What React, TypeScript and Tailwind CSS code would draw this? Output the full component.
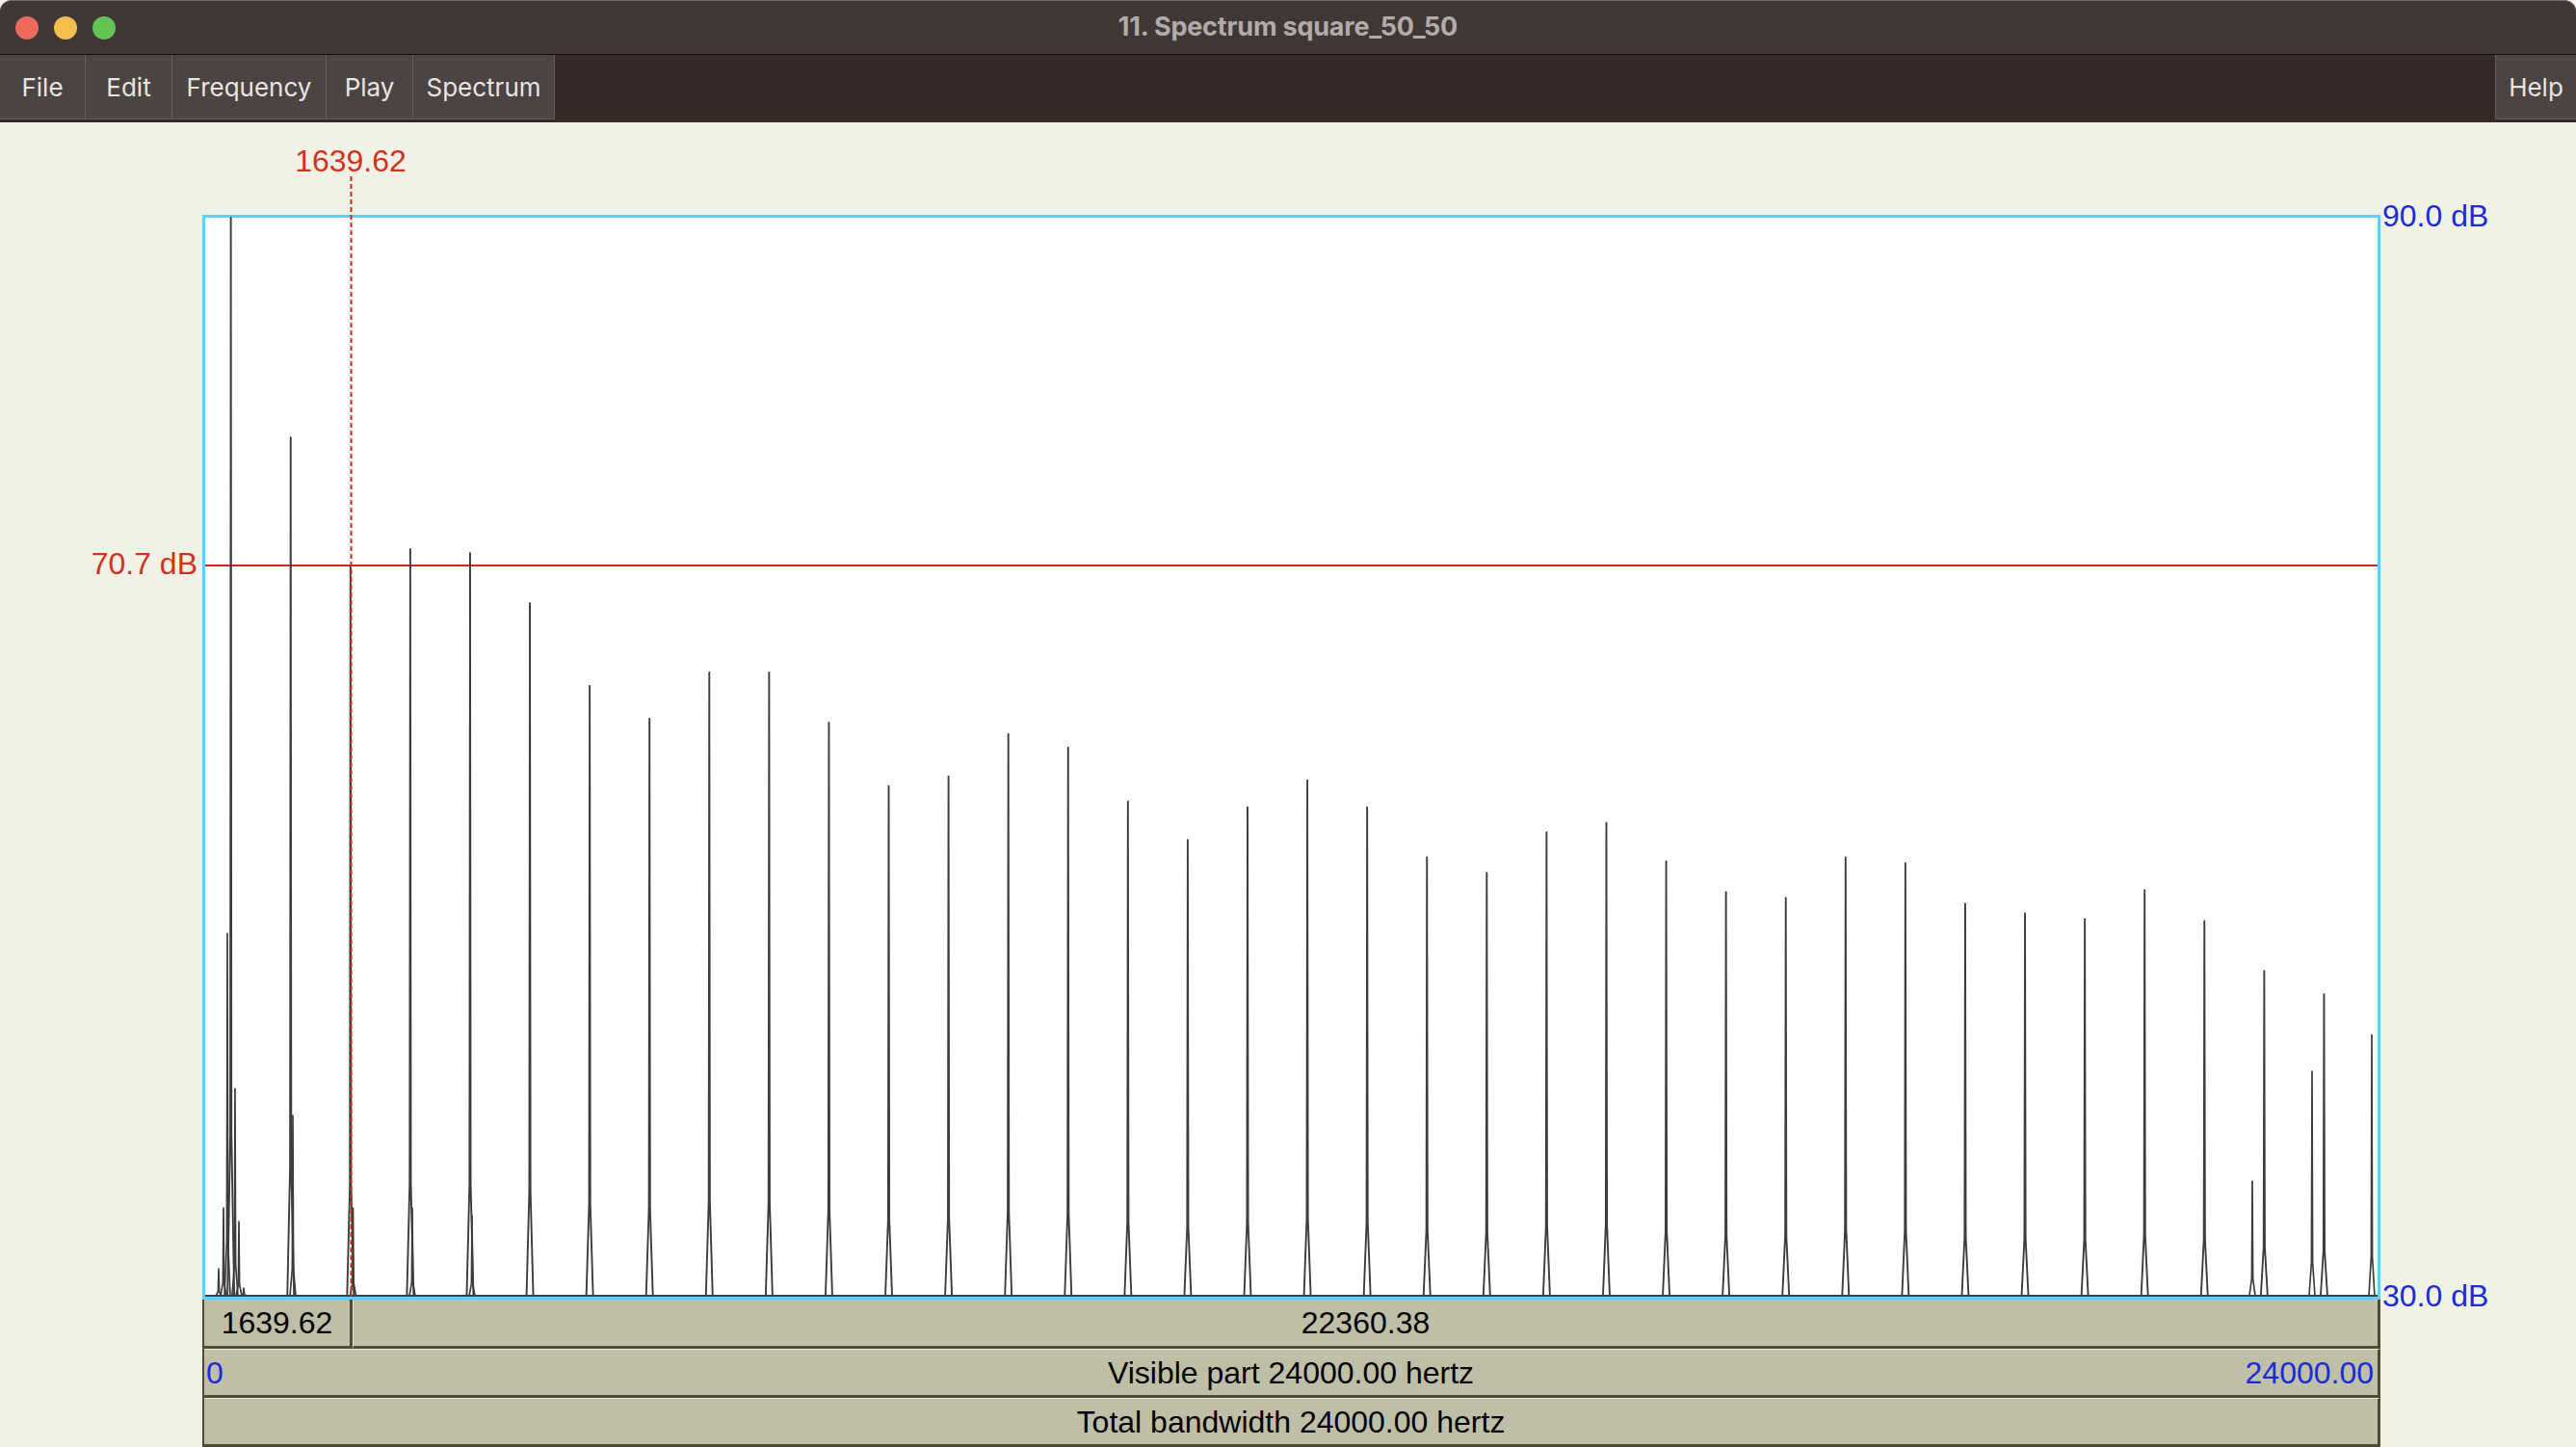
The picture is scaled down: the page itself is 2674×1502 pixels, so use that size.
import React from "react";

const tops: number[] = [
  226, 454, 587, 570, 574, 626, 712, 746, 698, 698, 750, 816, 806, 762, 776, 832,
  872, 838, 810, 838, 890, 906, 864, 854, 894, 926, 932, 890, 896, 938, 948, 954,
  924, 956, 1008, 1032,
];

const BASE = 1345;

const mainPeaks: [number, number][] = tops.map((t, k) => [208.6 + (2 * k + 1) * 31.04, t]);

const minorPeaks: [number, number][] = [
  [227, 1317],
  [232, 1254],
  [236, 969],
  [244, 1130],
  [248, 1268],
  [253, 1337],
  [304, 1158],
  [366.5, 1254],
  [428, 1254],
  [490, 1262],
  [2338, 1226],
  [2400, 1112],
  [2462, 1074],
];

function spike(x: number, top: number, half: number) {
  const mid = Math.min(BASE, top + (BASE - top) * 0.85);
  return `${x - half},${BASE} ${x - 0.6},${mid} ${x},${top} ${x + 0.6},${mid} ${x + half},${BASE}`;
}

function MenuButton({ label, w }: { label: string; w: string }) {
  return (
    <div
      className={`${w} h-[67px] bg-[#4c4442] border-r border-b border-[#675e5b] flex items-center justify-center text-[26px] text-[#e8e4e1] font-['Inter',sans-serif]`}
    >
      {label}
    </div>
  );
}

export default function App() {
  return (
    <div className="w-[2674px] h-[1502px] bg-[#f2f1e6] flex flex-col overflow-hidden font-['Liberation_Sans',Arial,sans-serif]">
      {/* Title bar */}
      <div className="h-[56px] shrink-0 bg-[#403836] border-t border-[#6e6764] rounded-t-[12px] grid grid-cols-[1fr_auto_1fr] items-center">
        <div className="flex items-center gap-[16px] pl-[16px]">
          <span className="w-[24px] h-[24px] rounded-full bg-[#ee6a5f]" />
          <span className="w-[24px] h-[24px] rounded-full bg-[#f5be4f]" />
          <span className="w-[24px] h-[24px] rounded-full bg-[#61c554]" />
        </div>
        <div className="text-[27px] font-bold text-[#b3aba8] font-['Inter',sans-serif] tracking-[-0.2px]">
          11. Spectrum square_50_50
        </div>
        <div />
      </div>
      <div className="h-[1px] shrink-0 bg-[#141010]" />
      {/* Menu bar */}
      <div className="h-[70px] shrink-0 bg-[#352a28] flex items-start">
        <MenuButton label="File" w="w-[89px]" />
        <MenuButton label="Edit" w="w-[90px]" />
        <MenuButton label="Frequency" w="w-[160px]" />
        <MenuButton label="Play" w="w-[90px]" />
        <MenuButton label="Spectrum" w="w-[147px]" />
        <div className="ml-auto w-[84px] h-[67px] bg-[#4c4442] border-l border-b border-[#675e5b] flex items-center justify-center text-[26px] text-[#e8e4e1] font-['Inter',sans-serif]">
          Help
        </div>
      </div>

      {/* Content */}
      <div className="relative flex-1">
        <div className="ml-[210px] mt-[96px] w-[2261px] h-[1126px] border-[3px] border-[#66ccff] bg-white" />
        <div className="ml-[210px] w-[2261px] flex flex-col text-[32px] leading-none text-black">
          <div className="flex h-[51px] border-l-2 border-[#4d4d35]">
            <div className="w-[154px] bg-[#bfbfa8] border-r-[3px] border-b-[3px] border-[#4d4d35] flex items-center justify-center">
              1639.62
            </div>
            <div className="flex-1 bg-[#bfbfa8] border-l border-l-[#e4e4d4] border-r-[3px] border-b-[3px] border-r-[#4d4d35] border-b-[#4d4d35] flex items-center justify-center">
              22360.38
            </div>
          </div>
          <div className="h-[51px] border-l-2 border-[#4d4d35] flex">
            <div className="flex-1 bg-[#bfbfa8] border-t border-t-[#e6e6d8] border-r-[3px] border-b-[3px] border-r-[#4d4d35] border-b-[#4d4d35] grid grid-cols-[1fr_auto_1fr] items-center px-[2px]">
              <span className="text-[#192dd7] justify-self-start">0</span>
              <span>Visible part 24000.00 hertz</span>
              <span className="text-[#192dd7] justify-self-end pr-[2px]">24000.00</span>
            </div>
          </div>
          <div className="h-[51px] border-l-2 border-[#4d4d35] flex">
            <div className="flex-1 bg-[#bfbfa8] border-t border-t-[#e6e6d8] border-r-[3px] border-b-[3px] border-r-[#4d4d35] border-b-[#4d4d35] flex items-center justify-center">
              Total bandwidth 24000.00 hertz
            </div>
          </div>
        </div>

        {/* Chart drawing */}
        <svg
          className="absolute left-0 top-0 pointer-events-none"
          width={2674}
          height={1375}
          viewBox="0 127 2674 1375"
        >
          <line x1={213} y1={587} x2={2468} y2={587} stroke="#cc2b1d" strokeWidth={2} />
          <line x1={213} y1={BASE} x2={2468} y2={BASE} stroke="#404040" strokeWidth={2} />
          {minorPeaks.map(([x, t], i) => (
            <polyline
              key={`m${i}`}
              points={spike(x, t, 3)}
              fill="none"
              stroke="#3d3d3d"
              strokeWidth={1.7}
              strokeLinejoin="round"
            />
          ))}
          {mainPeaks.map(([x, t], i) => (
            <polyline
              key={`p${i}`}
              points={spike(x, t, 3.5)}
              fill="none"
              stroke="#3d3d3d"
              strokeWidth={1.9}
              strokeLinejoin="round"
            />
          ))}
          <line
            x1={364.5}
            y1={183}
            x2={364.5}
            y2={1346}
            stroke="#cc2b1d"
            strokeWidth={2}
            strokeDasharray="5 3"
          />
        </svg>

        {/* Labels */}
        <span className="absolute left-[364px] top-[24px] -translate-x-1/2 text-[32px] leading-none text-[#d0321f]">
          1639.62
        </span>
        <span className="absolute left-0 top-[442px] w-[205px] text-right text-[32px] leading-none text-[#d0321f]">
          70.7 dB
        </span>
        <span className="absolute left-[2473px] top-[81px] text-[32px] leading-none text-[#192dd7]">
          90.0 dB
        </span>
        <span className="absolute left-[2473px] top-[1202px] text-[32px] leading-none text-[#192dd7]">
          30.0 dB
        </span>
      </div>
    </div>
  );
}
